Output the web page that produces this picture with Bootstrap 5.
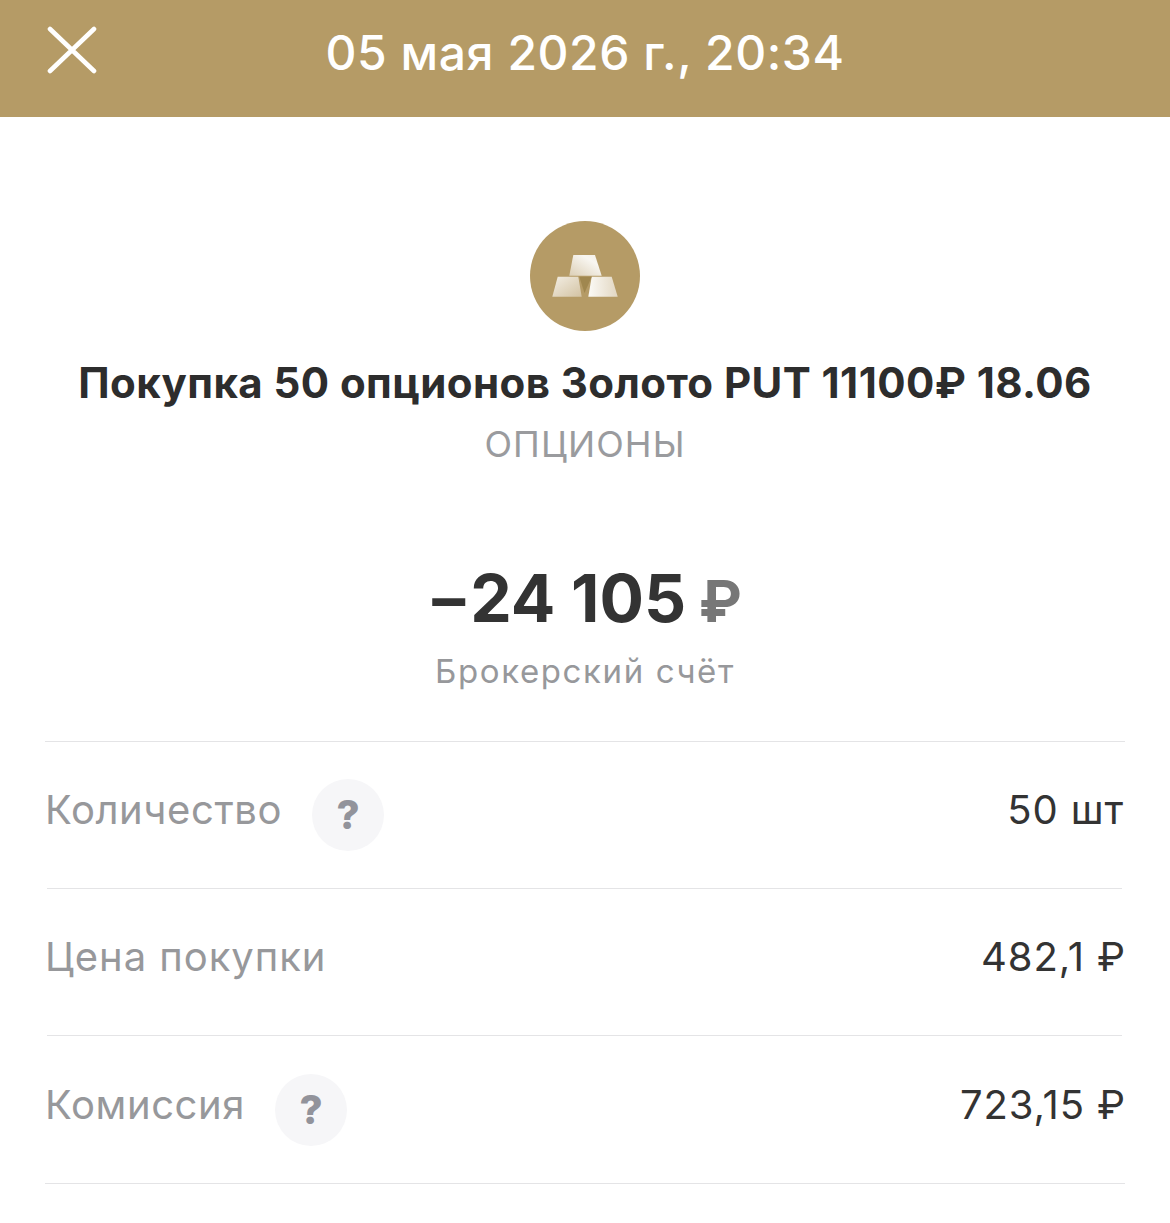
<!doctype html>
<html lang="ru"><head><meta charset="utf-8"><title>Операция</title>
<link href="https://cdn.jsdelivr.net/npm/bootstrap@5.3.0/dist/css/bootstrap.min.css" rel="stylesheet">
<style>
html,body{background:#fff}
body{font-family:Inter,"Liberation Sans",sans-serif;width:1170px;height:1223px;overflow:hidden}
.topbar{height:117px;background:#b59b66;color:#fff;font-size:48px;font-weight:500;padding:0 47px;position:relative}
.topbar-x{position:absolute;left:47px;top:26px}
.topbar-date{letter-spacing:.55px;line-height:1;padding-bottom:12px}
.logo-wrap{padding-top:104px}
.logo-disc{width:110px;height:110px;border-radius:50%;background:#b59b66}
.op-title{font-size:42px;font-weight:700;color:#2d2d2d;line-height:48px;margin-top:28px;letter-spacing:.43px;white-space:nowrap}
.op-kind{font-size:36px;color:#9a9b9e;line-height:44px;margin-top:15px;letter-spacing:1.1px}
.amount{font-size:66px;font-weight:700;color:#333;line-height:72px;height:72px;margin-top:96px;letter-spacing:0;padding-left:4px}
.amount-minus{margin-right:5px}
.amount-cur{color:#777;font-size:58px;margin-left:-3px}
.account{font-size:33px;color:#97989b;line-height:40px;margin-top:17px;letter-spacing:1.6px}
.details{margin:50px 45px 0;border-top:1px solid #e4e4e6}
.line-row{height:147px;border-bottom:1px solid #e4e4e6;margin:0 3px 0 2px;font-size:40px;color:#333}
.line-row.last-row{margin:0;padding:0 3px 0 2px;height:148px}
.line-label{color:#97989b;letter-spacing:.6px;line-height:48px;padding-bottom:10px;margin-left:-2px;white-space:nowrap}
.line-label-wide{letter-spacing:.95px}
.line-val{letter-spacing:.9px;line-height:48px;padding-bottom:10px;margin-right:-2px;white-space:nowrap}
.rub-sign{margin-right:-2px}
.hint-disc{width:72px;height:72px;border-radius:50%;background:#f6f6f8;color:#92939b;font-size:40px;font-weight:800;margin-left:30px;line-height:1}
</style></head>
<body>
<header class="topbar d-flex align-items-center justify-content-center">
<svg class="topbar-x" width="50" height="50" viewBox="0 0 50 50" aria-label="Закрыть"><path d="M3 3 47 45M47 3 3 45" stroke="#fff" stroke-width="4.6" stroke-linecap="round" fill="none"/></svg>
<div class="topbar-date">05 мая 2026 г., 20:34</div>
</header>
<main class="text-center">
<div class="logo-wrap d-flex justify-content-center">
<div class="logo-disc d-flex align-items-center justify-content-center">
<svg width="110" height="110" viewBox="0 0 110 110"><defs><linearGradient id="barTop" x1="0" y1="1" x2="1" y2="0"><stop offset="0" stop-color="#dccfb6"/><stop offset=".7" stop-color="#f8f6f1"/><stop offset="1" stop-color="#f3eee3"/></linearGradient><linearGradient id="barLeft" x1="0" y1="0" x2="1" y2="1"><stop offset="0" stop-color="#f3eee4"/><stop offset="1" stop-color="#d3c3a3"/></linearGradient><linearGradient id="barRight" x1="0" y1="0" x2="1" y2="0"><stop offset="0" stop-color="#fbfaf6"/><stop offset="1" stop-color="#e2d7c2"/></linearGradient></defs><path d="M43.3 34H65l6.7 20.7H39.3z" fill="url(#barTop)"/><path d="M27.7 55.700H48.300L51.700 75.700H22.300z" fill="url(#barLeft)"/><path d="M61.700 55.700H81.700L87.700 75.700H58.300z" fill="url(#barRight)"/><path d="M49.300 55.700H61.700L54.500 72z" fill="#a0874f"/></svg>
</div></div>
<h1 class="op-title mb-0">Покупка 50 опционов Золото PUT 11100₽ 18.06</h1>
<div class="op-kind">ОПЦИОНЫ</div>
<div class="amount"><span class="amount-minus">–</span>24 105 <span class="amount-cur">₽</span></div>
<div class="account">Брокерский счёт</div>
</main>
<section class="details">
<div class="line-row d-flex align-items-center justify-content-between"><div class="d-flex align-items-center"><span class="line-label">Количество</span><span class="hint-disc d-flex align-items-center justify-content-center">?</span></div><span class="line-val">50 шт</span></div>
<div class="line-row d-flex align-items-center justify-content-between"><span class="line-label line-label-wide">Цена покупки</span><span class="line-val">482,1 <span class="rub-sign">₽</span></span></div>
<div class="line-row last-row d-flex align-items-center justify-content-between"><div class="d-flex align-items-center"><span class="line-label">Комиссия</span><span class="hint-disc d-flex align-items-center justify-content-center">?</span></div><span class="line-val">723,15 <span class="rub-sign">₽</span></span></div>
</section>
<script src="https://cdn.jsdelivr.net/npm/bootstrap@5.3.0/dist/js/bootstrap.bundle.min.js"></script>
</body></html>
